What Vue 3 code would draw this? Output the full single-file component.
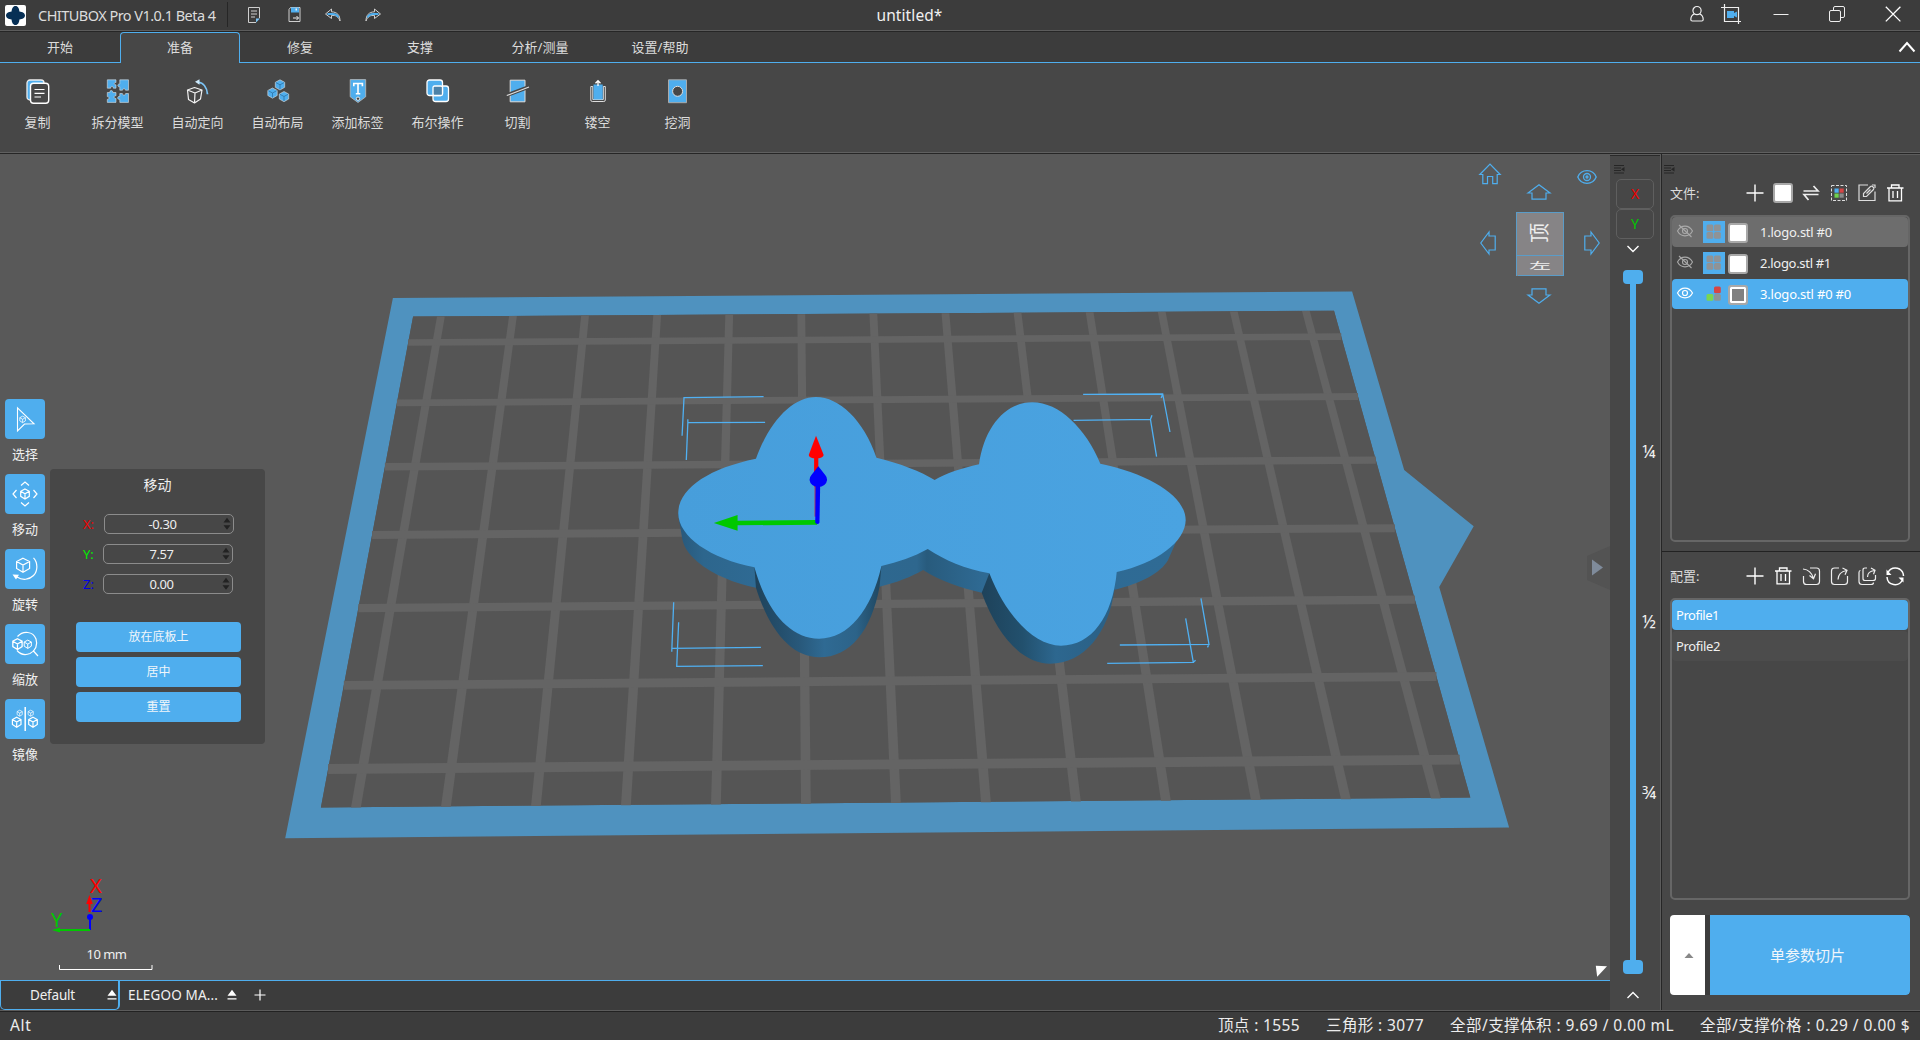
<script setup>
const cube = '<path d="M12 7l4.3 2.3v5L12 17l-4.3-2.7v-5zM7.7 9.3L12 11.8l4.3-2.5M12 11.8V17"/>'

const icons = {
  doc: '<g fill="none" stroke="#cfcfcf"><path d="M17.5 15V4.5h-11v15H14"/><path d="M9 8h6M9 11h6M9 14h4"/></g><path d="M14 19.5v-4h4z" fill="#7cc4f5"/>',
  save: '<path d="M8.5 4.500h9.500v14h-11v-12z" fill="none" stroke="#cfcfcf"/><path d="M9 4.500h8v5H9z" fill="#4faeee"/><path d="M13.500 5.500h1.500v2h-1.500z" fill="#eee"/><path d="M11 15h5.500M14.500 13l2 2-2 2" fill="none" stroke="#eee"/>',
  undo: '<path d="M10.500 6L4.500 11l6 4.500v-3c4-.5 7 1 8.500 5.500 0-6-3-9-8.500-9.200z" fill="#3c3c3c" stroke="#cfcfcf"/><path d="M6.500 11h5c3 0 5 1.200 6 3.500" fill="none" stroke="#4faeee" stroke-width="1.800"/>',
  redo: '<path d="M13.500 6l6 5-6 4.500v-3c-4-.5-7 1-8.500 5.500 0-6 3-9 8.500-9.200z" fill="#3c3c3c" stroke="#cfcfcf"/><path d="M17.500 11h-5c-3 0-5 1.200-6 3.500" fill="none" stroke="#4faeee" stroke-width="1.800"/>',
  user: '<g fill="none" stroke="#eee" stroke-width="1.200"><circle cx="12" cy="8.600" r="4.100"/><path d="M9.500 11.800C7 13 5.800 15 5.800 17.500q0 1.500 1.500 1.500h9.400q1.500 0 1.500-1.500c0-2.500-1.200-4.500-3.700-5.700"/></g>',
  record: '<g fill="none" stroke="#eee" stroke-width="1.200"><path d="M2 5.500h17.500V22M5.500 2v17.500H22"/></g><path d="M8 9h7v2l3-1.500v6l-3-1.500v2H8z" fill="#4faeee"/>',
  min: '<path d="M4.500 12.500h15" stroke="#eee"/>',
  restore: '<g fill="none" stroke="#eee"><rect x="4.500" y="8.500" width="11" height="11" rx="1.500"/><path d="M8.500 8V6q0-1.500 1.500-1.500h8q1.500 0 1.500 1.500v8q0 1.500-1.500 1.500h-2"/></g>',
  close: '<path d="M4.800 4.800l14.600 14.600M19.400 4.800L4.800 19.400" stroke="#fff" stroke-width="1.300"/>',
  copy: '<rect x="1" y="1" width="17" height="20" rx="3" fill="#4faeee" stroke="#eee" stroke-width="1.300"/><rect x="4.500" y="4.200" width="18.200" height="20" rx="3" fill="#474747" stroke="#fff" stroke-width="1.400"/><path d="M8.500 10.500h10M8.500 14.300h10M8.500 18h6.500" stroke="#fff" stroke-width="1.200"/>',
  split: '<g fill="#4faeee" stroke="#ddd" stroke-width=".6" stroke-linejoin="round"><path d="M1.300.8H10v2.800c-1.800-.6-2.600 2.200 0 2.200v3.400H7.300c.3-2.300-3-2.300-2.600 0H1.300z"/><path d="M13.800.8h8.700v10.400h-3c-.2-2-2.800-2-3 0h-2.700V7.800c-2.600.6-2.600-3.400 0-2.800z"/><path d="M1.300 13.500h2.500c-.4-2.600 3.400-2.600 3 0H10v3.300c-2.500-.4-2.500 3 0 2.700v3.900H1.300v-3c2.200.2 2.200-3 0-2.800z"/><path d="M13.800 14.500h2.600c0 2.200 3.200 2.200 3.200 0h2.900v8.900h-8.700v-3c-2.800.6-2.800-3.600 0-3z"/></g>',
  orient: '<g fill="none" stroke="#f2f2f2" stroke-width="1.200" stroke-linejoin="round"><path d="M1.500 11l7-2.500 7.500 2.500-1.500 9-6 4-6-3.500zM1.500 11l7.500 3 7-3M9 14l-.5 10"/></g><path d="M12 3.200c5.500.6 9 5.500 9.500 12" fill="none" stroke="#7cc4f5" stroke-width="1.800"/><path d="M9 2.800L13.500.3v5.500z" fill="#cde9fb"/>',
  layout: '<g fill="#4faeee" stroke="#ddd" stroke-width=".6"><path d="M14 .8l4.700 2.500v5L14 11 9.300 8.300v-5zM6.500 9l4.700 2.500v5l-4.700 2.700-4.700-2.700v-5zM18 12.500l4.700 2.500v5L18 22.700 13.300 20v-5z"/></g><g fill="none" stroke="#286a9c" stroke-width=".7"><path d="M9.800 3.500L14 5.800l4.200-2.300M14 5.800v4.500M2.300 11.700L6.500 14l4.200-2.300M6.500 14v4.500M13.800 15.200L18 17.500l4.200-2.300M18 17.500V22"/></g>',
  label: '<path d="M4.200.6h15.500v17.200L12 23.500l-7.800-5.700z" fill="#4faeee" stroke="#bbb" stroke-width=".8"/><path d="M7.800 7.200V4.500h8.600v2.700M12 4.500v10.200M9.800 14.800h4.500" fill="none" stroke="#fff" stroke-width="1.600"/><circle cx="12" cy="19.700" r="1.700" fill="#474747" stroke="#fff" stroke-width=".8"/>',
  bool: '<g stroke="#fff" stroke-width="1.300"><rect x="7" y="7" width="15.500" height="15.500" rx="2.500" fill="#4faeee"/><rect x="1" y="1" width="15.500" height="15.500" rx="2.500" fill="#4faeee"/><rect x="7" y="7" width="9.500" height="9.500" rx="1.500" fill="#4d82a8"/></g>',
  cut: '<path d="M4.200 1.200H19v21.600H4.200z" fill="#4faeee" stroke="#ddd"/><path d="M0 18.500L24 9.500V5.500L0 14.500z" fill="#474747"/><path d="M.8 16.500L23 8" stroke="#ddd" stroke-width="1.200"/>',
  hollow: '<path d="M4.800 7.500V21q0 1.500 1.500 1.500h11.500q1.500 0 1.500-1.500V7.500h-2v13H6.800v-13z" fill="#474747" stroke="#ddd"/><path d="M7.500 5.500h9.200v15H7.500z" fill="#4faeee"/><path d="M12 7V1.800M9.500 4.200L12 1.700l2.500 2.500" fill="none" stroke="#fff" stroke-width="1.300"/>',
  hole: '<path d="M2.500.8h18v22.900h-18z" fill="#4faeee" stroke="#aaa"/><circle cx="11.600" cy="12.300" r="5" fill="#474747" stroke="#ddd"/>',
  select: '<g fill="none" stroke="#fff" stroke-width="1.100" stroke-linejoin="miter"><path d="M4.500.8l16.500 16-9.500.2-7 7z"/><g transform="translate(1.800 4.600) scale(.65)" stroke-width="1.200">' + cube + '</g></g>',
  move: '<g fill="none" stroke="#fff" stroke-width="1.200"><path d="M8 3.500L12 0l4 3.500M8 20.500l4 3.500 4-3.500M3.500 8L0 12l3.500 4M20.500 8L24 12l-3.500 4"/>' + cube + '</g>',
  rotate: '<g fill="none" stroke="#fff" stroke-width="1.200"><path d="M10 1.200l6.600 3.300v7L10 15.200 3.600 11.500v-7zM3.600 4.500L10 8l6.600-3.500M10 8v7.200"/><path d="M20.500.8C25 5.500 25 14 20.500 18.500S9.500 23.500 4 20"/></g><path d="M-.5 17.500l6.500.3-3 4.800z" fill="#fff"/>',
  scale: '<g fill="none" stroke="#fff" stroke-width="1.200"><path d="M4.500 4.500C10-1.500 20-1 23 7c2 6-.5 12-6 14.500-5 2-10 .5-13-3M20 18.500l5 5.500"/><g transform="translate(-8.500 -.8) scale(1.080)">' + cube + '</g><g transform="translate(4.800 2.300) scale(.83)">' + cube + '</g></g>',
  mirror: '<g fill="none" stroke="#fff" stroke-width="1.200"><path d="M12.200 0v24" stroke-width="1.500"/><g transform="translate(-8.300 3.200)">' + cube + '</g><g transform="translate(8 3.200)">' + cube + '</g><g transform="translate(-.5 -1) scale(.6)">' + cube + '</g><g transform="translate(10.500 -1) scale(.6)">' + cube + '</g></g>',
  plus: '<path d="M12 3.500v17M3.500 12h17" stroke="#fff" stroke-width="1.400"/>',
  swap: '<path d="M4.500 10H19l-4.500-5M19.500 13.500H5l4.500 5.500" fill="none" stroke="#eee" stroke-width="1.700"/>',
  colors: '<rect x="4.500" y="4.500" width="15" height="15" fill="none" stroke="#ddd" stroke-dasharray="3 1.500"/><rect x="7.500" y="7.500" width="4.200" height="4.200" fill="#4faeee"/><rect x="12.500" y="7.500" width="4.200" height="4.200" fill="#d64545"/><rect x="7.500" y="12.500" width="4.200" height="4.200" fill="#6fd14e"/><rect x="12.500" y="12.500" width="4.200" height="4.200" fill="#8a8a8a"/>',
  edit: '<g fill="none" stroke="#ddd" stroke-width="1.200"><path d="M13 4H4v15.500h16v-9M17 4h3v3"/><path d="M8.500 15.500v-3l7-7q1-.8 2 0l1 1q.8 1 0 2l-7 7zM11.500 12.500l4-4"/></g>',
  trash: '<g fill="none" stroke="#fff" stroke-width="1.300"><path d="M4 7h16.500M8.500 7V4h7.500v3M6 7v12.800h12.500V7M10 10v7M14.500 10v7"/></g>',
  importer: '<g fill="none" stroke="#eee" stroke-width="1.200"><path d="M11 4h6.500q3 0 3 3v10.500q0 3-3 3h-10q-3 0-3-3V12"/><path d="M4 5c5 .5 9 4 10.500 9.500M10.500 11.500l4 3.200 2-5"/></g>',
  exporter: '<g fill="none" stroke="#eee" stroke-width="1.200"><path d="M12 4H7.500q-3 0-3 3v10.500q0 3 3 3h10q3 0 3-3V12"/><path d="M11 15.500c.2-4.500 3-8 8.500-9M15.500 4l4.500 2.300-2 4.500"/></g>',
  multi: '<g fill="none" stroke="#eee" stroke-width="1.200"><path d="M12 4h-2q-2 0-2 2v8.500q0 2 2 2h8q2.500 0 2.500-2V11"/><path d="M5.500 6.500q-1.500 0-1.500 2v9q0 3 3 3h9q2.500 0 2.500-2"/><path d="M12.500 13c0-3.500 2.500-6 7-6.500M16 4l4 2.300-1.500 4"/></g>',
  refresh: '<g fill="none" stroke="#fff" stroke-width="1.500"><path d="M5 8.500c3-6 11-6 14.500-.5q1 2 1 4M4 13c.5 9 12 10 15.500 3"/></g><path d="M3.500 5.500v5.500h5zM20.500 18.500v-5h-5z" fill="#fff"/>',
  eye: '<g fill="none" stroke="currentColor" stroke-width="1.200"><path d="M4.500 12c3.500-6.500 11.500-6.500 15 0-3.500 6.500-11.500 6.500-15 0z"/><circle cx="12" cy="12" r="2.500"/></g>',
  eyeoff: '<g fill="none" stroke="#aaa" stroke-width="1.100"><path d="M4.500 12c3.500-6.500 11.500-6.500 15 0-3.500 6.500-11.500 6.500-15 0z"/><circle cx="12" cy="12" r="2.500"/><path d="M6 6l12.500 12"/></g>',
  viewEye: '<g fill="none" stroke="#4faeee" stroke-width="1.300"><path d="M2.800 12c3.500-8.500 14.900-8.500 18.400 0-3.500 8.500-14.900 8.500-18.400 0z"/><circle cx="12" cy="12" r="3.500"/><circle cx="12" cy="12" r="1"/></g>',
  home: '<path d="M1.800 12.500L12 2l10.200 10.500h-3v9.200h-4.500V14.500H9.500v7.200H4.800v-9.200z" fill="none" stroke="#4faeee" stroke-width="1.200"/>',
  arrow: '<path d="M1 13L12 4.800 23 13h-4v6.200H5V13z" fill="none" stroke="#4faeee" stroke-width="1.200"/>',
  eject: '<path d="M7.500 12.800L12 6.800l4.500 6zM7.500 15.200h9v1.200h-9z" fill="#fff"/>',
  grip: '<path d="M1 8.500h10M1 11h7M1 13.500h7M1 16h10" stroke="#262626"/><path d="M8 12.200l3.500-2.200v4.500z" fill="#262626"/>',
}

const titleTools = ['doc', 'save', 'undo', 'redo']
const tabs = ['开始', '准备', '修复', '支撑', '分析/测量', '设置/帮助']
const ribbon = [
  ['copy', '复制'], ['split', '拆分模型'], ['orient', '自动定向'], ['layout', '自动布局'], ['label', '添加标签'],
  ['bool', '布尔操作'], ['cut', '切割'], ['hollow', '镂空'], ['hole', '挖洞'],
]
const tools = [['select', '选择'], ['move', '移动'], ['rotate', '旋转'], ['scale', '缩放'], ['mirror', '镜像']]
const axes = [
  { n: 'X', v: '-0.30', c: '#f00000', w: 28 },
  { n: 'Y', v: '7.57', c: '#00ee00', w: 24 },
  { n: 'Z', v: '0.00', c: '#0000e6', w: 24 },
]
const actions = ['放在底板上', '居中', '重置']
const files = [
  { name: '1.logo.stl #0', state: 'hover', w: 72 },
  { name: '2.logo.stl #1', state: '', w: 71 },
  { name: '3.logo.stl #0 #0', state: 'active', w: 91 },
]
const profileIcons = ['plus', 'trash', 'importer', 'exporter', 'multi', 'refresh']
const stats = [
  ['顶点 : 1555', 82], ['三角形 : 3077', 98], ['全部/支撑体积 : 9.69 / 0.00 mL', 224], ['全部/支撑价格 : 0.29 / 0.00 $', 210],
]

// Build plate grid in viewport coordinates
const columns = Array.from({ length: 13 }, (_, i) => {
  const xt = 440.9 + 72.08 * i
  const xb = 355.9 + 90 * i
  const yt = 316.5 - 0.46 * i
  const yb = 807.5 - 0.75 * i
  return `${xt - 3.9},${yt} ${xt + 3.9},${yt} ${xb + 4.9},${yb} ${xb - 4.9},${yb}`
})
const rows = [
  [342.5, 336.6, 6.6], [402.8, 396.5, 6.8], [466.8, 460.1, 7.4], [534.9, 528.2, 8],
  [608.1, 599.6, 8.3], [685.4, 676.5, 8.8], [769, 759.7, 9.8],
].map(([l, r, h]) => {
  const xl = 413.1 - (l - 316.6) * 0.1878
  const xr = 1334 + (r - 310.7) * 0.28
  return `${xl},${l - h / 2} ${xr},${r - h / 2} ${xr},${r + h / 2} ${xl},${l + h / 2}`
})

// Spreads a label's letters over a given width
const vFit = {
  mounted(el, { value }) {
    if (!value) return
    const n = el.textContent.trim().length
    el.style.letterSpacing = (value - el.getBoundingClientRect().width) / n + 'px'
  },
}
</script>

<template>
  <div class="app">
    <header class="titlebar">
      <svg class="logo" viewBox="0 0 21 21"><rect width="21" height="21" rx="2" fill="#fff" /><path d="M10.500 1C13 1 14.200 3.500 14.400 6.500 17.500 6.800 20 8.200 20 10.500s-2.500 3.700-5.600 4C14.200 17.500 13 20 10.500 20s-3.700-2.500-3.900-5.500C3.500 14.200 1 12.800 1 10.500s2.500-3.700 5.600-4C6.800 3.500 8 1 10.500 1z" fill="#062f55" /></svg>
      <div class="appname"><span v-fit="177.5">CHITUBOX Pro V1.0.1 Beta 4</span></div>
      <div class="quick">
        <svg v-for="t in titleTools" :key="t" class="ic" viewBox="0 0 24 24" v-html="icons[t]"></svg>
      </div>
      <div class="doctitle"><span v-fit="66">untitled*</span></div>
      <div class="winbtns">
        <svg class="ic" viewBox="0 0 24 24" v-html="icons.user"></svg>
        <svg class="ic rec" viewBox="0 0 24 24" v-html="icons.record"></svg>
        <svg class="ic wmin" viewBox="0 0 24 24" v-html="icons.min"></svg>
        <svg class="ic wres" viewBox="0 0 24 24" v-html="icons.restore"></svg>
        <svg class="ic wclose" viewBox="0 0 24 24" v-html="icons.close"></svg>
      </div>
    </header>

    <nav class="tabs">
      <div v-for="(t, i) in tabs" :key="t" class="tab" :class="{ on: i === 1 }">{{ t }}</div>
      <div class="tabfill"><svg width="18" height="12" viewBox="0 0 18 12"><path d="M1.500 10.500L9 2l7.500 8.500" fill="none" stroke="#fff" stroke-width="2" /></svg></div>
    </nav>

    <section class="ribbon">
      <div v-for="r in ribbon" :key="r[0]" class="tool">
        <svg class="ic" viewBox="0 0 24 25" v-html="icons[r[0]]"></svg>
        <span>{{ r[1] }}</span>
      </div>
    </section>

    <main class="body">
      <div class="left">
        <div class="viewport">
          <svg class="scene" viewBox="0 154 1610 826" width="1610" height="826">
            <defs>
              <linearGradient id="flankA" x1="0" x2="1"><stop offset="0" stop-color="#1e425a" /><stop offset=".35" stop-color="#28587a" /><stop offset=".55" stop-color="#2f6a93" /><stop offset=".8" stop-color="#2c6389" /><stop offset="1" stop-color="#1f465f" /></linearGradient>
              <linearGradient id="flankB" x1="0" x2="1"><stop offset="0" stop-color="#1e425a" /><stop offset=".3" stop-color="#22506d" /><stop offset=".55" stop-color="#2d678f" /><stop offset="1" stop-color="#2a5f84" /></linearGradient>
              <linearGradient id="wall" x1="0" x2="1"><stop offset="0" stop-color="#28587a" /><stop offset=".05" stop-color="#2d668d" /><stop offset=".15" stop-color="#2f6a93" /><stop offset=".47" stop-color="#2e678e" /><stop offset=".49" stop-color="#285b7d" /><stop offset=".6" stop-color="#2f6a93" /><stop offset="1" stop-color="#2f6b95" /></linearGradient>
              <linearGradient id="top" x1="0" x2="1"><stop offset="0" stop-color="#479edb" /><stop offset="1" stop-color="#4aa3e1" /></linearGradient>
            </defs>
            <path fill="#4f92bf" fill-rule="evenodd" d="M392.900 298.100L1352.100 291.500 1404.200 470.100 1473.700 526.300 1439.200 587 1509.100 827.400 285.200 838.200zM413.100 316.600L320.900 807.500 1470.300 797.500 1334 310.700z" />
            <path fill="#555" d="M413.100 316.600L1334 310.700 1470.300 797.500 320.900 807.500z" />
            <g fill="#646464">
              <polygon v-for="c in columns" :key="c" :points="c" />
              <polygon v-for="r in rows" :key="r" :points="r" />
            </g>
            <g transform="translate(640 370) scale(.38265 .33333)">
              <path fill="url(#wall)" d="M100 430C102 460 106 470 108 490 112 530 125 550 150 575 190 615 250 640 303 653L626 650C670 638 710 620 740 600 780 630 840 655 893 668L1238 660C1310 640 1360 610 1380 570L1426 450z" />
              <path fill="url(#flankA)" d="M299 592L303 653C340 790 400 862 468 862 550 862 605 780 626 650L631 588z" />
              <path fill="url(#flankB)" d="M913 610L893 668C935 800 1000 881 1072 881 1160 881 1225 790 1240 658L1246 606z" />
              <path fill="url(#top)" d="M303 266C340 150 400 81 460 81 520 81 585 150 618 263 680 280 735 305 770 330 800 310 840 295 886 283 900 170 955 97 1026 97 1095 97 1165 175 1203 281 1335 312 1426 380 1426 450 1426 515 1350 580 1246 606 1235 740 1180 827 1100 827 1030 827 955 735 913 610 850 597 795 570 752 537 715 560 675 577 631 588 605 720 545 806 468 806 390 806 330 720 299 592 185 567 100 500 100 430 100 355 180 295 303 266z" />
              <g class="box">
                <path d="M110 197L115 83 323 80M121 270L125 158 327 157M125 158v-10M1158 73L1366 72 1385 186M1366 72l-4 12M1133 151L1334 148 1350 260M1334 148l4-12" />
                <path d="M88 697L83 845M83 835L316 832M101 757L96 889 321 887M1466 685L1487 823 1254 825M1487 823l-4 9M1426 745L1446 877 1221 880M1446 877l6-6" />
              </g>
              <path d="M455 260h11v90h-11z" fill="#f00" /><path d="M456 350h4v90h-4z" fill="#a33b66" />
              <path d="M460 197L480 255Q478 265 460 265T441 255z" fill="#f00" />
              <path d="M463 450L255 452V435L193 459 255 482V466L463 464z" fill="#00c800" />
              <path d="M466 289L484 315A23 22 0 1 1 448 315z" fill="#00f" />
              <path d="M459 340h12l-2 118q-5 8-11 0z" fill="#00f" />
            </g>
            <path d="M1587 556L1610 546V590L1587 580z" fill="#535353" />
            <path d="M1592 559.500L1603 567.500 1592 575.500z" fill="#7f8b9b" />
            <path d="M1595.800 965.700L1607 966.200 1597.200 976.800z" fill="#fff" />
            <path d="M1516 212h48v64h-48z" fill="#868486" /><path d="M1516.500 212v64M1516 212.500h48M1516 255.500h48M1563.500 212v63.500M1518 275.500h46" stroke="#5a9cc8" fill="none" />
            <g stroke-width="2" fill="none"><path d="M89.500 904v8" stroke="#f00" /><path d="M90 917v13" stroke="#00f" /><path d="M60 930h30" stroke="#00c800" /></g>
            <path d="M89.500 895l3.300 9h-6.600z" fill="#f00" /><circle cx="90" cy="917" r="3" fill="#00f" /><path d="M52 930l8-2.500v5z" fill="#00c800" />
            <path d="M59.500 965v4.500h92.500V965" fill="none" stroke="#fff" />
          </svg>
          <span class="glyph gx">X</span><span class="glyph gz">Z</span><span class="glyph gy">Y</span>
          <span class="scale"><span v-fit="40">10 mm</span></span>
          <span class="face ftop">顶</span><span class="face fleft">左</span>
          <svg class="ic vhome" viewBox="0 0 24 24" v-html="icons.home"></svg>
          <svg class="ic veye" viewBox="0 0 24 24" v-html="icons.viewEye"></svg>
          <svg class="ic aup" viewBox="0 0 24 24" v-html="icons.arrow"></svg>
          <svg class="ic aleft" viewBox="0 0 24 24" v-html="icons.arrow"></svg>
          <svg class="ic aright" viewBox="0 0 24 24" v-html="icons.arrow"></svg>
          <svg class="ic adown" viewBox="0 0 24 24" v-html="icons.arrow"></svg>

          <div class="tools">
            <div v-for="t in tools" :key="t[0]" class="ttool">
              <div class="tbtn"><svg viewBox="-1 -1 26 26" width="26" height="26" v-html="icons[t[0]]"></svg></div>
              <span>{{ t[1] }}</span>
            </div>
          </div>
          <div class="movepanel">
            <h3>移动</h3>
            <div v-for="a in axes" :key="a.n" class="axis" :class="'row' + a.n">
              <label :style="{ color: a.c }">{{ a.n }}:</label>
              <div class="field"><span v-fit="a.w">{{ a.v }}</span><svg width="8" height="14" viewBox="0 0 8 14"><path d="M.5 5.500L4 .8l3.500 4.700zM.5 8.200h7L4 12.800z" fill="#222" /></svg></div>
            </div>
            <div class="acts"><button v-for="a in actions" :key="a">{{ a }}</button></div>
          </div>
        </div>
        <div class="plates">
          <div class="plate on"><span v-fit="45">Default</span><svg class="ic" viewBox="0 0 24 24" v-html="icons.eject"></svg></div>
          <div class="plate"><span v-fit="90">ELEGOO MA...</span><svg class="ic" viewBox="0 0 24 24" v-html="icons.eject"></svg></div>
          <svg class="addplate" width="12" height="12" viewBox="0 0 12 12"><path d="M6 .5v11M.5 6h11" stroke="#fff" stroke-width="1.200" /></svg>
        </div>
      </div>

      <aside class="slider">
        <svg class="grip" viewBox="0 0 12 24" v-html="icons.grip"></svg>
        <div class="xy red">X</div>
        <div class="xy green">Y</div>
        <svg class="chev" width="14" height="8" viewBox="0 0 14 8"><path d="M1.500 1L7 6.500 12.500 1" fill="none" stroke="#fff" stroke-width="1.400" /></svg>
        <div class="track"><i></i><b class="q1">¼</b><b class="q2">½</b><b class="q3">¾</b><i></i></div>
        <svg class="chev2" width="14" height="8" viewBox="0 0 14 8"><path d="M1.500 7L7 1.500 12.500 7" fill="none" stroke="#fff" stroke-width="1.400" /></svg>
      </aside>

      <aside class="right">
        <div class="files">
          <svg class="grip" viewBox="0 0 12 24" v-html="icons.grip"></svg>
          <div class="head">
            <span>文件:</span>
            <div class="icons">
              <svg class="ic" viewBox="0 0 24 24" v-html="icons.plus"></svg>
              <div class="slot"><i class="chk big"></i></div>
              <svg class="ic" viewBox="0 0 24 24" v-html="icons.swap"></svg>
              <svg class="ic" viewBox="0 0 24 24" v-html="icons.colors"></svg>
              <svg class="ic" viewBox="0 0 24 24" v-html="icons.edit"></svg>
              <svg class="ic" viewBox="0 0 24 24" v-html="icons.trash"></svg>
            </div>
          </div>
          <div class="list filelist">
            <div v-for="f in files" :key="f.name" class="file" :class="f.state">
              <svg class="ic" viewBox="0 0 24 24" v-html="f.state === 'active' ? icons.eye : icons.eyeoff"></svg>
              <svg v-if="f.state !== 'active'" class="sw" viewBox="0 0 22 22"><path fill="#4faeee" d="M0 0h22v22H0z" /><g fill="#8f9396"><rect x="3.500" y="3.500" width="6.800" height="6.800" rx="1.500" /><rect x="11" y="3.500" width="6.800" height="6.800" rx="1.500" /><rect x="3.500" y="11" width="6.800" height="6.800" rx="1.500" /><rect x="11" y="11" width="6.800" height="6.800" rx="1.500" /></g></svg>
              <svg v-else class="sw" viewBox="0 0 22 22"><rect x="11" y="3.500" width="6.800" height="6.800" rx="1.500" fill="#d64545" /><rect x="3.500" y="11" width="6.800" height="6.800" rx="1.500" fill="#7ad651" /><rect x="11" y="11" width="6.800" height="6.800" rx="1.500" fill="#8f9396" /></svg>
              <i class="chk" :class="{ part: f.state === 'active' }"></i>
              <span v-fit="f.w">{{ f.name }}</span>
            </div>
          </div>
        </div>
        <div class="profiles">
          <div class="head">
            <span>配置:</span>
            <div class="icons"><svg v-for="p in profileIcons" :key="p" class="ic" viewBox="0 0 24 24" v-html="icons[p]"></svg></div>
          </div>
          <div class="list proflist">
            <div class="prof on"><span v-fit="43">Profile1</span></div>
            <div class="prof"><span v-fit="44">Profile2</span></div>
          </div>
          <div class="slice">
            <div class="more"><svg width="10" height="5" viewBox="0 0 10 5"><path d="M5 0l4.500 5h-9z" fill="#888" /></svg></div>
            <button class="go">单参数切片</button>
          </div>
        </div>
      </aside>
    </main>

    <footer class="status">
      <div class="hint"><span v-fit="21.5">Alt</span></div>
      <div class="stats"><span v-for="s in stats" :key="s[0]" v-fit="s[1]">{{ s[0] }}</span></div>
    </footer>
  </div>
</template>

<style>
body { background: #3c3c3c; overflow: hidden; }
</style>

<style scoped>
.app { width: 1920px; height: 1040px; display: flex; flex-direction: column; overflow: hidden; background: #474747; color: #dcdcdc; font: 13px/18px "Noto Sans", "Noto Sans CJK SC", sans-serif; white-space: nowrap; }
.app * { box-sizing: border-box; }
.app span { display: inline-block; }
svg { display: block; overflow: visible; flex: none; }
.ic { width: 24px; height: 24px; }
i { font-style: normal; display: block; }
button { border: 0; padding: 0; background: #4faeee; color: #f0f6fb; font: inherit; }

.titlebar { height: 32px; flex: none; display: flex; align-items: flex-start; background: #3c3c3c; border-bottom: 1px solid #262626; box-shadow: inset 0 -1px #5c5c5c; }
.logo { width: 21px; height: 21px; margin: 5px 0 0 5px; }
.appname { margin: 2px 0 0 12px; width: 190px; height: 25px; border-right: 1px solid #262626; font-size: 14.5px; line-height: 27px; }
.quick { display: flex; gap: 15.500px; margin: 3px 0 0 14px; }
.doctitle { flex: 1; padding: 4px 0 0 492px; font-size: 15.5px; line-height: 23px; color: #f0f0f0; }
.winbtns { display: flex; padding-top: 2px; margin-right: 15px; }
.rec { margin-left: 10px; }
.wmin { margin-left: 26px; }
.wres { margin-left: 32px; }
.wclose { margin-left: 32px; }

.tabs { height: 31px; flex: none; display: flex; background: #3c3c3c; }
.tab { width: 120px; border-bottom: 1px solid #4faeee; text-align: center; line-height: 31px; }
.tab.on { background: #474747; border: 1px solid #4faeee; border-bottom: 0; border-radius: 4px 4px 0 0; line-height: 29px; }
.tabfill { flex: 1; border-bottom: 1px solid #4faeee; display: flex; justify-content: flex-end; align-items: flex-start; padding: 9px 4px 0 0; }

.ribbon { height: 91px; flex: none; display: flex; padding: 16px 0 0; border-bottom: 1px solid #262626; box-shadow: inset 0 -1px #606060; margin-left: -2.500px; }
.tool { width: 80px; display: flex; flex-direction: column; align-items: center; gap: 9px; }
.tool .ic { height: 25px; }

.body { flex: 1; display: flex; min-height: 0; }
.left { width: 1610px; display: flex; flex-direction: column; }
.viewport { height: 826px; position: relative; background: #595959; overflow: hidden; }
.box path { fill: none; stroke: #50b0f2; stroke-width: 1.3px; vector-effect: non-scaling-stroke; }
.viewport > .ic, .glyph, .face, .scale { position: absolute; }
.glyph { font: 20px/14px "Noto Sans", sans-serif; }
.gx { left: 90px; top: 725px; color: #f00; }
.gz { left: 91px; top: 744px; color: #00f; }
.gy { left: 51px; top: 759px; color: #00c800; }
.scale { left: 86.500px; top: 791px; color: #f0f0f0; }
.face { color: #eee; font-size: 20px; line-height: 20px; width: 20px; height: 20px; }
.ftop { left: 1530px; top: 69px; transform: rotate(-90deg); }
.fleft { left: 1530px; top: 102px; transform: scale(1.1, .45); }
.vhome { left: 1478px; top: 8px; }
.veye { left: 1575px; top: 11px; }
.aup { left: 1527px; top: 26px; }
.aleft { left: 1476px; top: 77px; transform: rotate(-90deg); }
.aright { left: 1580px; top: 77px; transform: rotate(90deg); }
.adown { left: 1527px; top: 130px; transform: rotate(180deg); }

.tools { position: absolute; left: 5px; top: 245px; display: flex; flex-direction: column; gap: 10px; }
.ttool { height: 65px; width: 40px; display: flex; flex-direction: column; align-items: center; gap: 6px; color: #f0f0f0; }
.tbtn { width: 40px; height: 40px; flex: none; border-radius: 4px; background: #4faeee; display: flex; align-items: center; justify-content: center; }
.movepanel { position: absolute; left: 50px; top: 315px; width: 215px; height: 275px; border-radius: 4px; background: #474747; color: #eee; display: flex; flex-direction: column; }
h3 { margin: 6px 0 20px; font-size: 14px; font-weight: 400; line-height: 20px; text-align: center; }
.axis { display: flex; height: 18px; margin-bottom: 12px; align-items: center; padding-left: 33px; }
.axis label { width: 20px; }
.rowX label { width: 21px; }
.field { width: 130px; height: 20px; flex: none; border: 1px solid #8c8c8c; border-radius: 5px; display: flex; align-items: center; justify-content: center; position: relative; padding-right: 13px; }
.field svg { position: absolute; right: 2px; top: 2px; }
.acts { margin: 17px 0 0 26px; display: flex; flex-direction: column; gap: 5px; width: 165px; }
.acts button { height: 30px; border-radius: 4px; font-size: 12px; }

.plates { height: 30px; display: flex; background: #3c3c3c; color: #f0f0f0; font-size: 13.500px; border-top: 1px solid #4faeee; }
.plate { width: 120px; display: flex; align-items: center; justify-content: space-between; padding: 0 3px 2px 8px; }
.plate .ic { width: 24px; margin-right: -7px; }
.plate.on { margin-top: -1px; border: 2px solid #4faeee; border-left-width: 1px; border-top: 0; border-bottom-width: 1px; border-radius: 0 0 5px 5px; padding: 0 1px 0 29px; }
.addplate { margin: 8px 0 0 14px; }

.slider { width: 50px; background: #474747; border-top: 1px solid #5c5c5c; display: flex; flex-direction: column; align-items: center; box-shadow: inset 0 1px #2a2a2a; }
.grip { width: 12px; height: 24px; position: relative; top: 2px; }
.slider .grip { align-self: flex-start; margin-left: 3px; }
.xy { width: 38px; height: 30px; border: 1px solid #5f5f5f; border-radius: 5px; text-align: center; line-height: 28px; font-size: 14px; }
.red { color: #f00000; }
.green { color: #00c800; }
.chev { margin: 6px 4px 0 0; }
.track { margin: 17px 4px 0 0; width: 20px; height: 704px; flex: none; display: flex; flex-direction: column; justify-content: space-between; background: linear-gradient(#4faeee, #4faeee) center / 6px 100% no-repeat; position: relative; }
.track i { height: 14px; border-radius: 4px; background: #4faeee; }
.track b { position: absolute; left: 19px; font-weight: 400; font-size: 18px; line-height: 20px; color: #f0f0f0; }
.q1 { top: 171px; }
.q2 { top: 341px; }
.q3 { top: 512px; }
.chev2 { margin: 17px 4px 0 0; }

.right { width: 260px; border-left: 1px solid #5c5c5c; display: flex; flex-direction: column; box-shadow: inset 1px 0 #262626; }
.files { height: 398px; flex: none; margin-left: 1px; border-bottom: 1px solid #222; border-top: 1px solid #5c5c5c; }
.files .grip { margin-left: 1px; height: 24px; }
.head { display: flex; justify-content: space-between; align-items: center; height: 24px; padding: 0 13px 0 8px; }
.files .head { margin-top: 2px; height: 24px; }
.icons { display: flex; gap: 4px; align-items: center; position: relative; top: -.500px; }
.slot { width: 24px; display: flex; justify-content: center; }
.chk { width: 20px; height: 20px; flex: none; border: 2px solid #a8a8a8; border-radius: 3px; background: #fff; }
.chk.part { background: #808080; box-shadow: inset 0 0 0 2px #fff; }
.list { margin-left: 8px; width: 240px; border: 2px solid #666; border-radius: 5px; display: flex; flex-direction: column; gap: 1px; }
.filelist { height: 327px; margin-top: 10px; }
.file { height: 30px; flex: none; border-radius: 4px; display: flex; align-items: center; color: #f0f0f0; padding-left: 1px; }
.file.hover { background: #6d6d6d; }
.file.active, .prof.on { background: #4faeee; color: #fff; }
.file .ic { margin-top: -3px; }
.sw { width: 22px; height: 22px; margin-left: 6px; }
.file .chk { margin: 1px 12px 0 3px; }
.profiles { flex: 1; margin-left: 1px; padding-top: 12px; }
.proflist { height: 302px; margin-top: 10px; }
.prof { height: 30px; border-radius: 4px; background: #4c4c4c; color: #f0f0f0; padding: 6px 0 0 4px; }
.slice { display: flex; height: 80px; width: 240px; margin: 15px 0 0 8px; border-radius: 4px; overflow: hidden; background: #3c3c3c; }
.more { width: 35px; background: #fff; margin-right: 5px; display: flex; align-items: center; justify-content: center; padding-left: 3px; }
.go { flex: 1; font-size: 15px; border-radius: 0 4px 4px 0; padding-right: 5px; }

.status { height: 30px; flex: none; border-top: 1px solid #5c5c5c; box-shadow: inset 0 1px #222; background: #3c3c3c; display: flex; justify-content: space-between; padding: 0 10px; font-size: 15.500px; line-height: 28px; color: #ededed; }
.stats { display: flex; gap: 26px; }
</style>
